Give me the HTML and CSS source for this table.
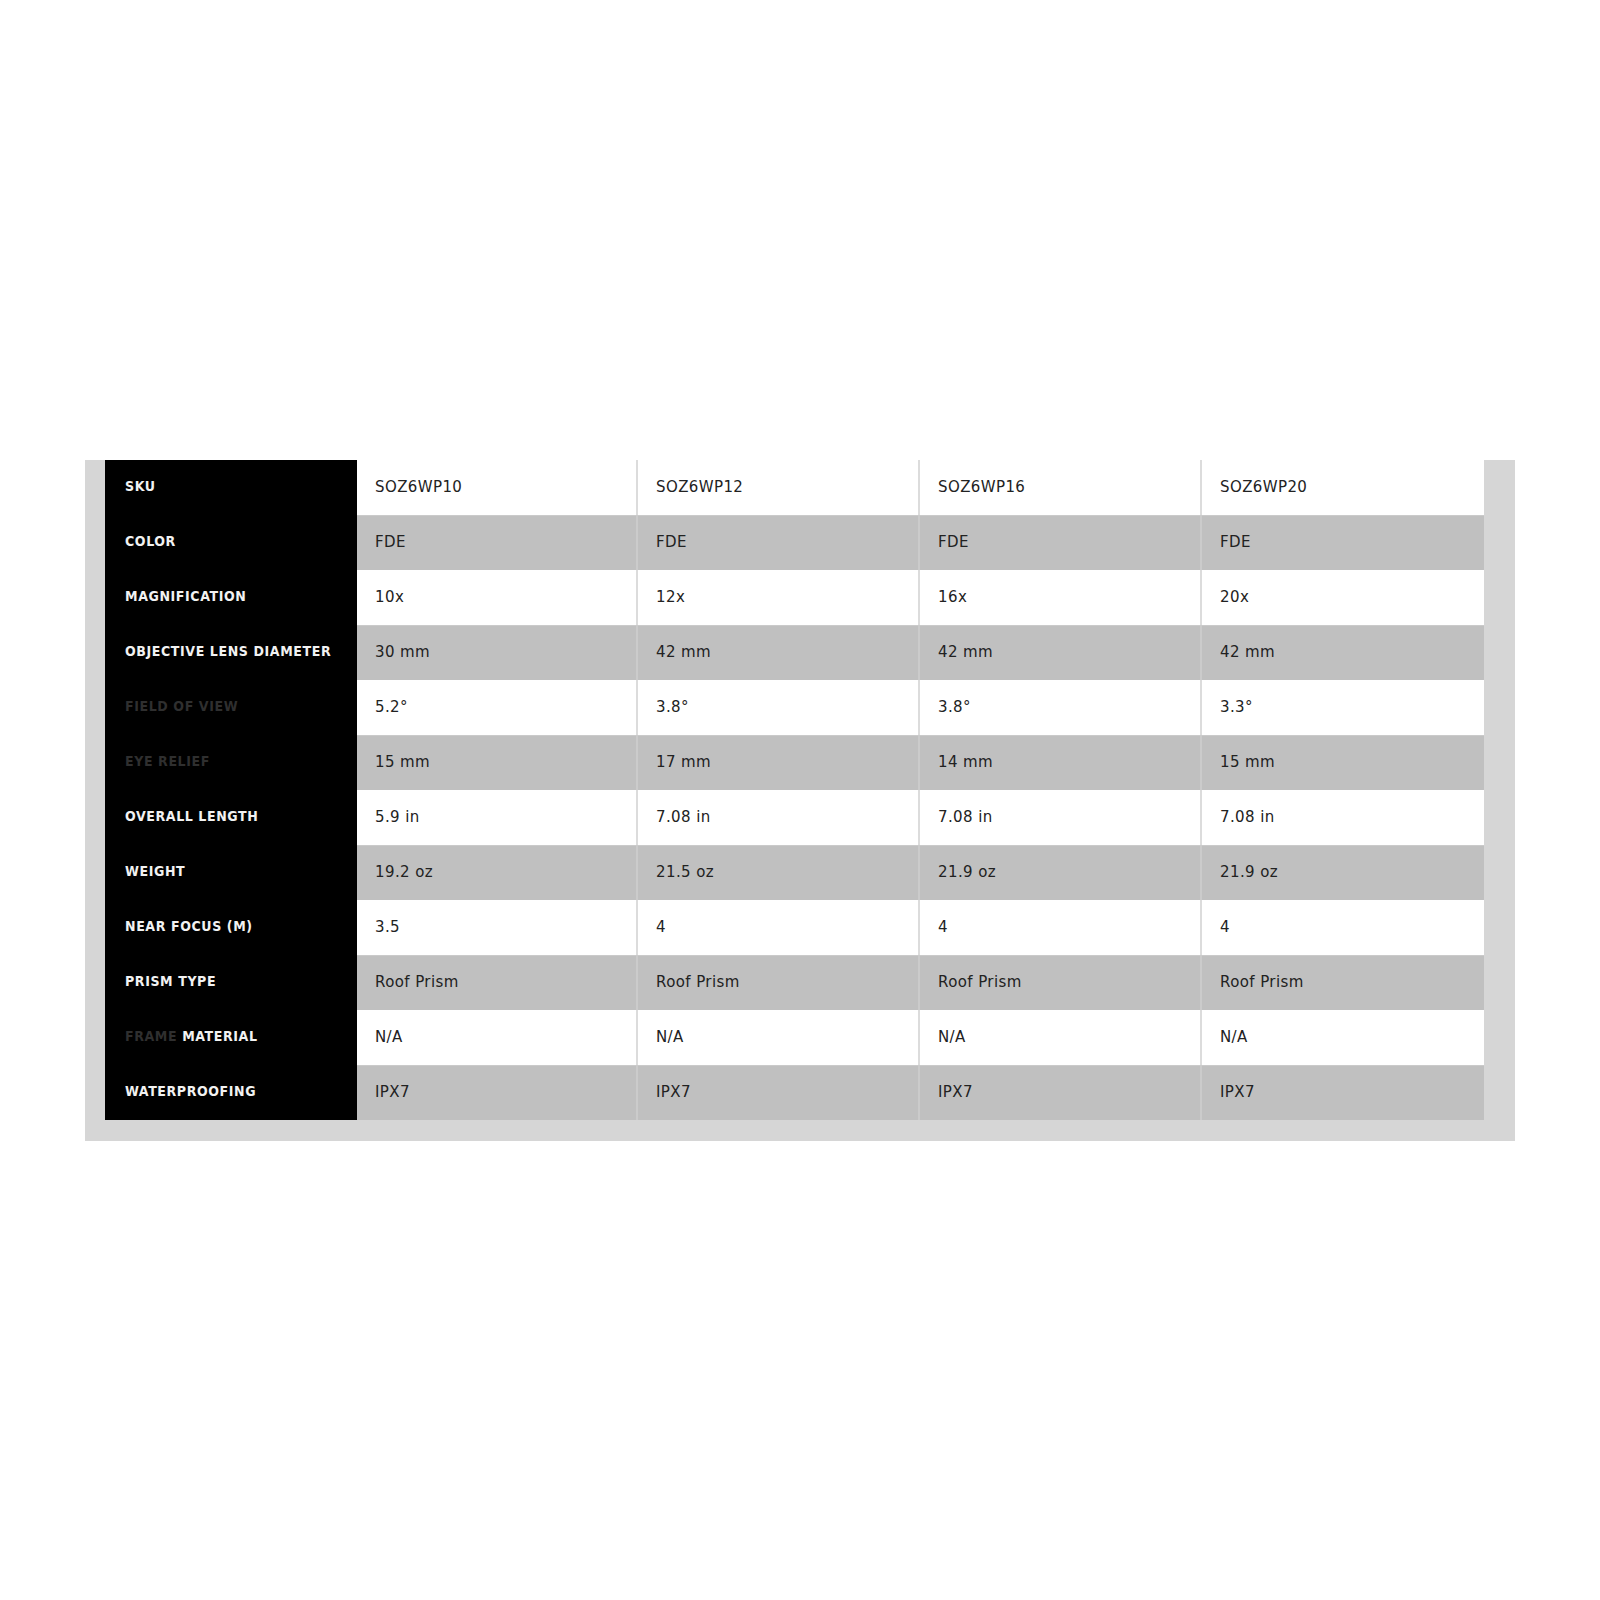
FILE: index.html
```html
<!DOCTYPE html>
<html>
<head>
<meta charset="utf-8">
<link rel="stylesheet" href="styles.css">
</head>
<body>
<div class="page">
  <div class="frame">
    <table class="specs">
      <colgroup>
        <col class="c-label"><col class="c1"><col class="c2"><col class="c3"><col class="c4">
      </colgroup>
      <tbody>
        <tr class="light"><th>SKU</th><td>SOZ6WP10</td><td>SOZ6WP12</td><td>SOZ6WP16</td><td>SOZ6WP20</td></tr>
        <tr class="dark"><th>COLOR</th><td>FDE</td><td>FDE</td><td>FDE</td><td>FDE</td></tr>
        <tr class="light"><th>MAGNIFICATION</th><td>10x</td><td>12x</td><td>16x</td><td>20x</td></tr>
        <tr class="dark"><th>OBJECTIVE LENS DIAMETER</th><td>30 mm</td><td>42 mm</td><td>42 mm</td><td>42 mm</td></tr>
        <tr class="light"><th><span class="dim">FIELD OF VIEW</span></th><td>5.2°</td><td>3.8°</td><td>3.8°</td><td>3.3°</td></tr>
        <tr class="dark"><th><span class="dim">EYE RELIEF</span></th><td>15 mm</td><td>17 mm</td><td>14 mm</td><td>15 mm</td></tr>
        <tr class="light"><th>OVERALL LENGTH</th><td>5.9 in</td><td>7.08 in</td><td>7.08 in</td><td>7.08 in</td></tr>
        <tr class="dark"><th>WEIGHT</th><td>19.2 oz</td><td>21.5 oz</td><td>21.9 oz</td><td>21.9 oz</td></tr>
        <tr class="light"><th>NEAR FOCUS (M)</th><td>3.5</td><td>4</td><td>4</td><td>4</td></tr>
        <tr class="dark"><th>PRISM TYPE</th><td>Roof Prism</td><td>Roof Prism</td><td>Roof Prism</td><td>Roof Prism</td></tr>
        <tr class="light"><th><span class="dim">FRAME</span> MATERIAL</th><td>N/A</td><td>N/A</td><td>N/A</td><td>N/A</td></tr>
        <tr class="dark"><th>WATERPROOFING</th><td>IPX7</td><td>IPX7</td><td>IPX7</td><td>IPX7</td></tr>
      </tbody>
    </table>
  </div>
</div>
</body>
</html>
```

FILE: styles.css
```css
html, body {
  margin: 0;
  padding: 0;
  background: #ffffff;
}

.page {
  padding: 460px 0 0 85px;
}

.frame {
  width: 1430px;
  box-sizing: border-box;
  background: #d6d6d6;
  padding: 0 31px 21px 20px;
}

.specs {
  width: 1379px;
  border-collapse: collapse;
  table-layout: fixed;
  font-family: "DejaVu Sans", sans-serif;
}

.c-label { width: 252px; }
.c1 { width: 280px; }
.c2 { width: 282px; }
.c3 { width: 282px; }
.c4 { width: 283px; }

.specs tr { height: 55px; }

.specs th {
  background: #000000;
  color: #f2f2f2;
  font-family: "DejaVu Sans Condensed", "DejaVu Sans", sans-serif;
  font-weight: bold;
  font-size: 14px;
  letter-spacing: 0.6px;
  text-align: left;
  padding: 0 0 3px 20px;
  vertical-align: middle;
  white-space: nowrap;
}

.specs th .dim {
  color: #2f2f2f;
}

.specs td {
  font-size: 15px;
  letter-spacing: 0.4px;
  color: #222222;
  padding: 0 0 2px 18px;
  vertical-align: middle;
  white-space: nowrap;
}

.specs td + td {
  border-left: 2px solid #dcdcdc;
}

.light td { background: #ffffff; }
.dark td {
  background: #c0c0c0;
  box-shadow: inset 0 1px 0 #cacaca;
}
.dark td + td { border-left-color: #cbcbcb; }
```
